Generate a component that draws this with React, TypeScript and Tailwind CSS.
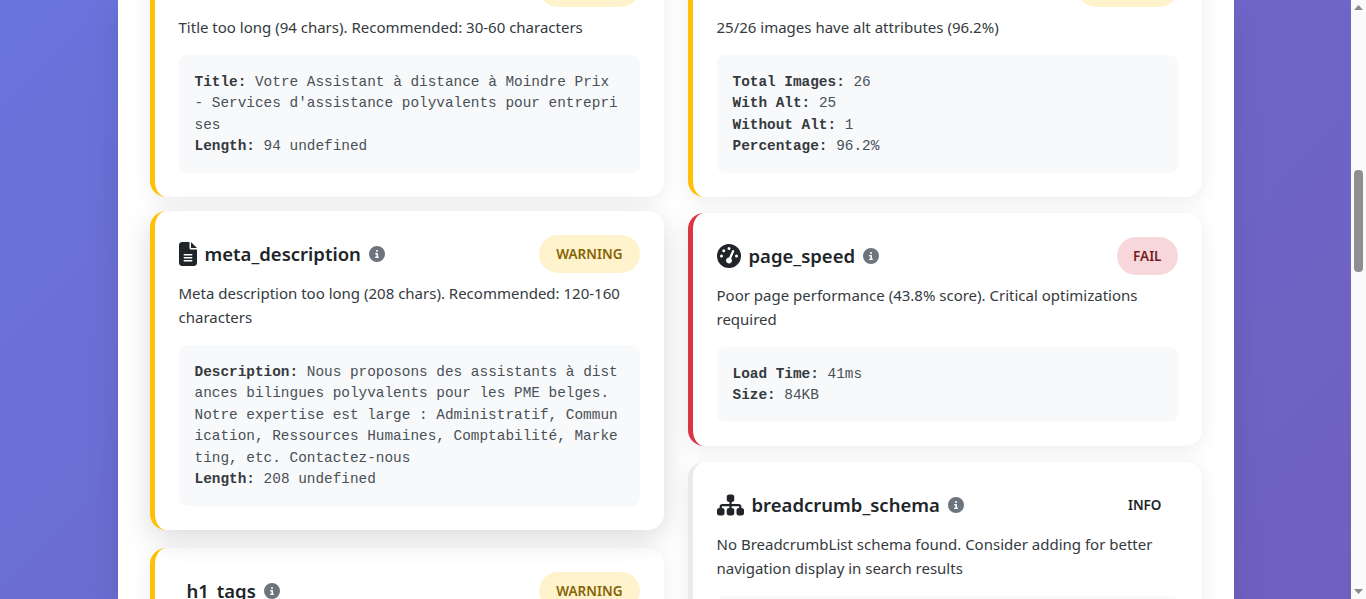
import { FaCircleInfo, FaFileLines, FaGaugeHigh, FaImage, FaHeading, FaSitemap } from "react-icons/fa6";
import type { ReactNode } from "react";

type Status = "warning" | "fail" | "info";

const borders: Record<Status, string> = {
  warning: "border-l-[#ffc107]",
  fail: "border-l-[#dc3545]",
  info: "border-l-[#e9ecef]",
};

const badges: Record<Status, string> = {
  warning: "bg-[#fff3cd] px-[17px] text-[#856404]",
  fail: "bg-[#f8d7da] px-4 text-[#721c24]",
  info: "bg-white px-4 text-[#212529]",
};

type Line = { label: string; value: string };

const Card = ({
  icon,
  name,
  status,
  text,
  lines,
  hovered,
}: {
  icon?: ReactNode;
  name: string;
  status: Status;
  text: string;
  lines?: Line[];
  hovered?: boolean;
}) => {
  return (
    <div
      className={`rounded-2xl border-l-[5px] bg-white p-6 ${borders[status]} ${
        hovered ? "-translate-y-0.5 shadow-[0_8px_30px_rgba(0,0,0,0.15)]" : "shadow-[0_4px_20px_rgba(0,0,0,0.08)]"
      }`}
    >
      <div className="mb-2 flex items-center justify-between">
        <div className="flex items-center gap-2 text-[18.5px] font-semibold text-[#212529]">
          {icon ?? <span />}
          <span>{name}</span>
          <FaCircleInfo className="text-base text-[#6c757d]" />
        </div>
        <span className={`rounded-[20px] py-2 text-[13.5px] leading-[22px] font-semibold ${badges[status]}`}>
          {status.toUpperCase()}
        </span>
      </div>
      <p className="text-[15px] leading-6 text-[#343a40]">{text}</p>
      {lines && (
        <div className="mt-4 rounded-lg bg-[#f8f9fa] px-4 pt-[17px] pb-[15px] font-['Liberation_Mono',monospace] text-[14.4px] leading-[21.5px] break-all text-[#495057]">
          {lines.map((line) => (
            <div key={line.label}>
              <strong className="text-[#343a40]">{line.label}:</strong> {line.value}
            </div>
          ))}
        </div>
      )}
    </div>
  );
};

const Scrollbar = () => {
  return (
    <div className="flex h-full w-[15px] flex-col items-center bg-[#fafafa]">
      <svg width="15" height="15" viewBox="0 0 15 15" className="shrink-0 text-[#8a8a8a]">
        <path d="M7.5 5 L12 10 L3 10 Z" fill="currentColor" />
      </svg>
      <div className="mt-[155px] h-[102px] w-[9px] rounded-[4px] bg-[#8f8f8f]" />
      <svg width="15" height="15" viewBox="0 0 15 15" className="mt-auto shrink-0 text-[#8a8a8a]">
        <path d="M3 5 L12 5 L7.5 10 Z" fill="currentColor" />
      </svg>
    </div>
  );
};

export default function App() {
  return (
    <div className="flex h-[599px] w-[1366px] overflow-hidden font-['Noto_Sans',sans-serif]">
      <div className="flex-1 overflow-hidden bg-[linear-gradient(135deg,#667eea_0%,#764ba2_100%)] bg-[size:1351px_3340px] bg-[position:0_-910px]">
        <div className="mx-auto grid h-full w-[1116px] grid-cols-2 items-start gap-6 bg-white px-8 shadow-[0_10px_30px_rgba(0,0,0,0.1)]">
          <div className="-mt-[55.4px] flex flex-col gap-4">
            <Card
              icon={<FaHeading className="text-lg" />}
              name="title_length"
              status="warning"
              text="Title too long (94 chars). Recommended: 30-60 characters"
              lines={[
                { label: "Title", value: "Votre Assistant à distance à Moindre Prix - Services d'assistance polyvalents pour entreprises" },
                { label: "Length", value: "94 undefined" },
              ]}
            />
            <Card
              icon={<FaFileLines className="h-6 w-[18px]" />}
              name="meta_description"
              status="warning"
              hovered
              text="Meta description too long (208 chars). Recommended: 120-160 characters"
              lines={[
                {
                  label: "Description",
                  value:
                    "Nous proposons des assistants à distances bilingues polyvalents pour les PME belges. Notre expertise est large : Administratif, Communication, Ressources Humaines, Comptabilité, Marketing, etc. Contactez-nous",
                },
                { label: "Length", value: "208 undefined" },
              ]}
            />
            <Card name="h1_tags" status="warning" text="" />
          </div>
          <div className="-mt-[55.4px] flex flex-col gap-4">
            <Card
              icon={<FaImage className="text-lg" />}
              name="image_alt"
              status="warning"
              text="25/26 images have alt attributes (96.2%)"
              lines={[
                { label: "Total Images", value: "26" },
                { label: "With Alt", value: "25" },
                { label: "Without Alt", value: "1" },
                { label: "Percentage", value: "96.2%" },
              ]}
            />
            <Card
              icon={<FaGaugeHigh className="text-2xl" />}
              name="page_speed"
              status="fail"
              text="Poor page performance (43.8% score). Critical optimizations required"
              lines={[
                { label: "Load Time", value: "41ms" },
                { label: "Size", value: "84KB" },
              ]}
            />
            <Card
              icon={<FaSitemap className="h-6 w-[27px]" />}
              name="breadcrumb_schema"
              status="info"
              text="No BreadcrumbList schema found. Consider adding for better navigation display in search results"
              lines={[{ label: "Found", value: "0" }]}
            />
          </div>
        </div>
      </div>
      <Scrollbar />
    </div>
  );
}
